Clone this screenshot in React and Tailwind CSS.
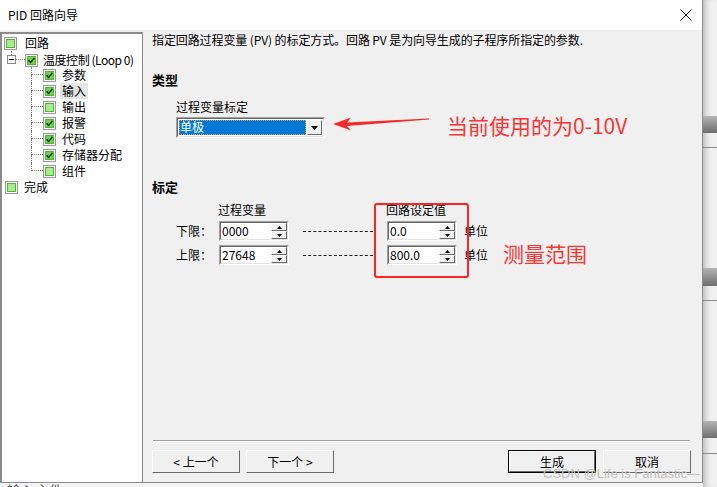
import React from 'react';

const FONT = "font-['Noto_Sans_CJK_SC','Liberation_Sans',sans-serif]";

function Check({ checked }) {
  return (
    <svg width="13" height="13" viewBox="0 0 13 13" className="shrink-0">
      <rect x="0.5" y="0.5" width="12" height="12" fill="#ffffff" stroke="#9a9a9a" />
      <rect x="2" y="2" width="9" height="9" fill="#4cb82e" />
      <rect x="3" y="3" width="7" height="7" fill={checked ? '#6fd14f' : '#a9eb8f'} />
      {checked && <path d="M3.6 6.2 L5.6 8.4 L9.4 4" fill="none" stroke="#173d10" strokeWidth="1.6" />}
    </svg>
  );
}

function ChildRow({ label, checked, last, selected }) {
  return (
    <div className="flex h-[16px] items-center">
      <div className="w-[29px] shrink-0" />
      <div className="w-[12px] h-full flex flex-col shrink-0">
        <div className="h-[8px] border-l border-b border-dotted border-[#7a7a7a]" />
        <div className={last ? 'h-[8px]' : 'h-[8px] border-l border-dotted border-[#7a7a7a]'} />
      </div>
      <Check checked={checked} />
      <span className={`ml-[4px] px-[2px] leading-[16px] ${selected ? 'bg-[#e5e5e5]' : ''}`}>{label}</span>
    </div>
  );
}

function SpinBtn({ up }) {
  return (
    <div className="flex-1 flex items-center justify-center bg-[#f0f0f0] border border-t-white border-l-white border-r-[#696969] border-b-[#696969]">
      <svg width="5" height="3" viewBox="0 0 5 3">
        {up ? <path d="M0 3 L5 3 L2.5 0 Z" fill="#000" /> : <path d="M0 0 L5 0 L2.5 3 Z" fill="#000" />}
      </svg>
    </div>
  );
}

function Spin({ value }) {
  return (
    <div className="w-[70px] h-[20px] flex shrink-0 border border-t-[#a0a0a0] border-l-[#a0a0a0] border-r-white border-b-white">
      <div className="flex-1 flex bg-white border border-t-[#696969] border-l-[#696969] border-r-[#e3e3e3] border-b-[#e3e3e3]">
        <span className="flex-1 pl-[1px] leading-[16px] text-[12px] text-[#000]">{value}</span>
        <div className="w-[16px] flex flex-col">
          <SpinBtn up />
          <SpinBtn />
        </div>
      </div>
    </div>
  );
}

function Btn({ children, primary }) {
  return (
    <div className={`w-[88px] h-[23px] flex ${primary ? 'border border-black' : ''}`}>
      <div className="flex-1 flex items-center justify-center bg-[#f0f0f0] border border-t-white border-l-white border-r-[#696969] border-b-[#696969] leading-[16px]">
        {children}
      </div>
    </div>
  );
}

export default function App() {
  return (
    <div className={`w-[717px] h-[487px] flex overflow-hidden bg-[#f0f0f0] text-[12px] text-black ${FONT}`}>
      <div className="w-[703px] flex flex-col shrink-0">
        {/* dialog */}
        <div className="relative h-[483px] flex flex-col border-r border-b border-[#8a8a8a] bg-[#f0f0f0]">
          <div className="h-[30px] bg-white flex items-center pl-[8px] pr-[10px] shrink-0">
            <span className="leading-[16px]">PID 回路向导</span>
            <svg className="ml-auto" width="12" height="12" viewBox="0 0 12 12">
              <path d="M0.5 0.5 L11.5 11.5 M11.5 0.5 L0.5 11.5" stroke="#111" strokeWidth="1" />
            </svg>
          </div>

          <div className="flex-1 flex min-h-0">
            {/* tree */}
            <div className="w-[143px] mt-[2px] bg-white border-t-2 border-l-2 border-r border-[#8c8c8c] pt-[1px] shrink-0 overflow-hidden">
              <div className="flex h-[16px] items-center pl-[2px]">
                <Check />
                <span className="ml-[8px] leading-[16px]">回路</span>
              </div>
              <div className="flex h-[16px] items-start">
                <div className="ml-[5px] w-[9px] flex flex-col items-center shrink-0">
                  <div className="h-[4px] border-l border-dotted border-[#7a7a7a]" />
                  <svg width="9" height="9" viewBox="0 0 9 9">
                    <rect x="0.5" y="0.5" width="8" height="8" fill="#fff" stroke="#8a8a8a" />
                    <path d="M2 4.5 L7 4.5" stroke="#000" />
                  </svg>
                </div>
                <div className="w-[9px] mt-[8px] border-t border-dotted border-[#7a7a7a]" />
                <div className="mt-[2px] flex items-center">
                  <Check checked />
                  <span className="ml-[5px] h-[14px] leading-[14px] tracking-[-0.45px] whitespace-nowrap">温度控制 (Loop 0)</span>
                </div>
              </div>
              <ChildRow label="参数" checked />
              <ChildRow label="输入" checked selected />
              <ChildRow label="输出" />
              <ChildRow label="报警" checked />
              <ChildRow label="代码" checked />
              <ChildRow label="存储器分配" checked />
              <ChildRow label="组件" last />
              <div className="flex h-[16px] items-center pl-[3px]">
                <Check />
                <span className="ml-[6px] leading-[16px]">完成</span>
              </div>
            </div>

            {/* content */}
            <div className="flex-1 flex flex-col pl-[9px] pr-[11px] pt-[2px] pb-[9px] min-w-0">
              <div className="leading-[16px] whitespace-nowrap tracking-[-0.1px]">指定回路过程变量 (PV) 的标定方式。回路 PV 是为向导生成的子程序所指定的参数.</div>
              <div className="mt-[24px] leading-[16px] font-bold text-[13px]">类型</div>
              <div className="pl-[24px]">
                <div className="mt-[11px] leading-[16px]">过程变量标定</div>
                <div className="mt-[2px] flex items-center">
                  <div className="w-[149px] h-[21px] flex shrink-0 border border-t-[#a0a0a0] border-l-[#a0a0a0] border-r-white border-b-white">
                    <div className="flex-1 flex bg-white border border-t-[#696969] border-l-[#696969] border-r-[#e3e3e3] border-b-[#e3e3e3] p-[1px]">
                      <div className="flex-1 bg-[#0078d7] text-white leading-[14px] pl-[1px] outline-1 outline-dotted outline-[#f0a040] -outline-offset-1">单极</div>
                      <div className="w-[15px] ml-[1px] flex items-center justify-center bg-[#f0f0f0] border border-t-white border-l-white border-r-[#696969] border-b-[#696969]">
                        <svg width="7" height="4" viewBox="0 0 7 4"><path d="M0 0 L7 0 L3.5 4 Z" fill="#000" /></svg>
                      </div>
                    </div>
                  </div>
                  <svg className="ml-[8px] -mt-[9px] shrink-0" width="96" height="16" viewBox="0 0 96 16">
                    <polygon points="0,9 18,2.5 14,7.5 96,3.6 96,4.6 14,11 18,15.5" fill="#f42a2a" />
                  </svg>
                  <span className="ml-[18px] -mt-[6px] text-[21px] leading-[24px] text-[#fb3434] whitespace-nowrap">当前使用的为0-10V</span>
                </div>
              </div>

              <div className="mt-[41px] leading-[16px] font-bold text-[13px]">标定</div>
              <div className="relative pl-[24px] mt-[7px]">
                <div className="flex leading-[16px]">
                  <span className="ml-[42px]">过程变量</span>
                  <span className="ml-[120px]">回路设定值</span>
                </div>
                <div className="mt-[3px] flex items-center">
                  <span className="w-[43px] shrink-0 leading-[16px]">下限：</span>
                  <Spin value="0000" />
                  <div className="ml-[14px] w-[70px] border-t border-dashed border-[#222]" />
                  <div className="ml-[14px]"><Spin value="0.0" /></div>
                  <span className="ml-[7px] leading-[16px]">单位</span>
                </div>
                <div className="mt-[4px] flex items-center">
                  <span className="w-[43px] shrink-0 leading-[16px]">上限：</span>
                  <Spin value="27648" />
                  <div className="ml-[14px] w-[70px] border-t border-dashed border-[#222]" />
                  <div className="ml-[14px]"><Spin value="800.0" /></div>
                  <span className="ml-[7px] leading-[16px]">单位</span>
                  <span className="ml-[15px] -mt-[4px] text-[21px] leading-[24px] text-[#fb3434] whitespace-nowrap">测量范围</span>
                </div>
                <div className="absolute left-[222px] top-[1px] w-[95px] h-[75px] border-2 border-[#ff2424] rounded-[3px]" />
              </div>

              <div className="flex-1" />
              <div className="h-[2px] border-t border-[#a0a0a0] border-b border-b-white mx-[1px]" />
              <div className="mt-[8px] flex">
                <Btn>&lt; 上一个</Btn>
                <div className="ml-[6px]"><Btn>下一个 &gt;</Btn></div>
                <div className="ml-auto"><Btn primary>生成</Btn></div>
                <div className="ml-[7px]"><Btn>取消</Btn></div>
              </div>
            </div>
          </div>

          <span className="absolute right-[2px] bottom-[1px] text-[13px] leading-[14px] text-[#c2c2c2] font-['Liberation_Sans',sans-serif] whitespace-nowrap">CSDN @Life is Fantastic—</span>
        </div>
        <div className="h-[4px] overflow-hidden bg-[#f4f4f4] pl-[7px]">
          <div className="text-[14px] leading-[16px] text-[#555] mt-[-1px]">输入主件</div>
        </div>
      </div>

      {/* background window edge */}
      <div className="flex-1 flex flex-col shadow-[inset_6px_0_6px_-4px_rgba(0,0,0,0.25)]">
        <div className="h-[116px]" />
        <div className="h-[17px] bg-gradient-to-b from-[#b4b4b4] to-[#6e6e6e]" />
        <div className="h-[14px]" />
        <div className="h-px bg-[#8a8a8a]" />
        <div className="h-[120px]" />
        <div className="h-[18px] bg-gradient-to-b from-[#b4b4b4] to-[#6e6e6e]" />
        <div className="h-[14px]" />
        <div className="h-px bg-[#8a8a8a]" />
        <div className="h-[120px]" />
        <div className="h-[17px] bg-gradient-to-b from-[#b4b4b4] to-[#6e6e6e]" />
        <div className="h-[15px]" />
        <div className="h-px bg-[#8a8a8a]" />
      </div>
    </div>
  );
}
